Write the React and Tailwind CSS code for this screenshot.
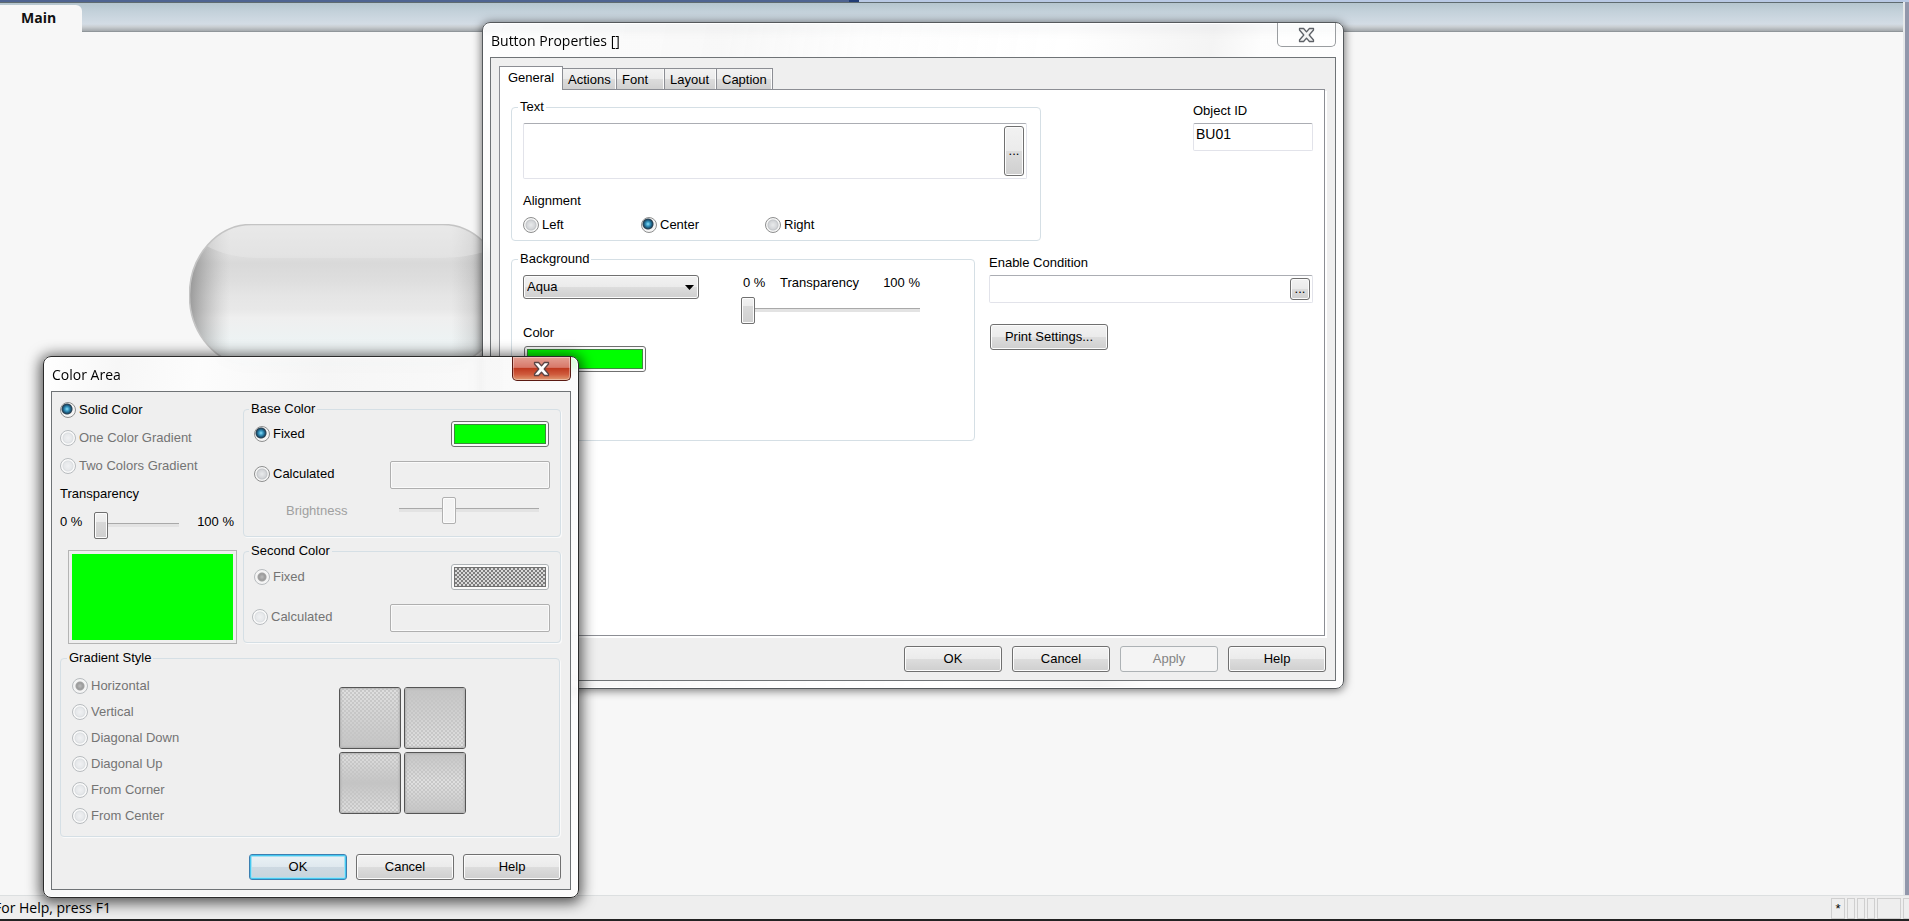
import React from "react";

const CONTROL =
  "rounded-[3px] border border-[#707070] bg-[linear-gradient(#f2f2f2,#ebebeb_50%,#dddddd_50%,#cfcfcf)] shadow-[inset_0_0_0_1px_#fcfcfc] text-black";

function PushButton({ children, className = "w-[98px]", variant = "normal" }) {
  const look =
    variant === "disabled"
      ? "rounded-[3px] border border-[#adb2b5] bg-[#f4f4f4] text-[#838383]"
      : variant === "default"
        ? "rounded-[3px] border border-[#3c7fb1] bg-[linear-gradient(#eaf2f6,#dfe8ee_50%,#cdd9e2_50%,#c8d4dc)] shadow-[inset_0_0_0_1px_#45c8f0,inset_0_0_0_2px_#a5e0f2] text-black"
        : CONTROL;
  return (
    <button type="button" disabled={variant === "disabled"} className={`h-[26px] shrink-0 leading-4 ${look} ${className}`}>
      {children}
    </button>
  );
}

function Radio({ name, label, defaultChecked, disabled, className = "" }) {
  return (
    <label className={`flex h-4 items-center gap-[3px] leading-4 ${disabled ? "text-[#747474]" : "text-black"} ${className}`}>
      <input
        type="radio"
        name={name}
        defaultChecked={defaultChecked}
        disabled={disabled}
        className="size-4 shrink-0 appearance-none rounded-full border border-[#8e8f8f] bg-[radial-gradient(circle_at_7px_7px,#e9ebec_0,#d3d5d8_4px,#c3c6c9_5px,#f6f6f6_6px)] checked:bg-[radial-gradient(circle_at_6px_6px,#8fe0f8_0,#3a9cc6_2px,#1b5577_4px,#2a3f4f_5px,#f4f4f4_6px)] disabled:border-[#b8bcbf] disabled:bg-[radial-gradient(circle_at_7px_7px,#f0f1f3_0,#e6e8ea_4px,#dcdfe2_5px,#fafafa_6px)] disabled:checked:bg-[radial-gradient(circle_at_7px_7px,#bbbbbb_0,#9c9c9c_3px,#a2a2a2_4px,#f4f4f4_5px)]"
      />
      {label}
    </label>
  );
}

function Slider({ label, value, disabled, className = "" }) {
  return (
    <input
      type="range"
      aria-label={label}
      defaultValue={value}
      disabled={disabled}
      className={`h-[27px] min-w-0 appearance-none bg-[linear-gradient(#a9a9a9,#a9a9a9_1px,#e3e3e3_1px)] bg-[length:100%_4px] bg-[position:0_11px] bg-no-repeat [&::-webkit-slider-thumb]:h-[27px] [&::-webkit-slider-thumb]:w-[14px] [&::-webkit-slider-thumb]:appearance-none [&::-webkit-slider-thumb]:rounded-[2px] [&::-webkit-slider-thumb]:border [&::-webkit-slider-thumb]:shadow-[inset_0_0_0_1px_#fcfcfc] ${
        disabled
          ? "[&::-webkit-slider-thumb]:border-[#b0b0b0] [&::-webkit-slider-thumb]:bg-[#f4f4f4]"
          : "[&::-webkit-slider-thumb]:border-[#707070] [&::-webkit-slider-thumb]:bg-[linear-gradient(#f2f2f2,#ebebeb_34%,#d9d9d9_34%,#cfcfcf)]"
      } ${className}`}
    />
  );
}

function Swatch({ label, disabled, className = "w-[98px]" }) {
  return (
    <button
      type="button"
      aria-label={label}
      disabled={disabled}
      className={`h-[26px] shrink-0 rounded-[3px] border bg-[#fafafa] p-0.5 ${disabled ? "border-[#adb2b5]" : "border-[#707070]"} ${className}`}
    >
      <span
        className={`block h-full border ${
          disabled
            ? "border-[#707070] bg-[repeating-conic-gradient(#7e7e7e_0_25%,#dadada_0_50%)] bg-[length:4px_4px]"
            : "border-[#3c8a3c] bg-[#00ff00]"
        }`}
      />
    </button>
  );
}

function Group({ title, legendClass = "ml-[6px]", className = "", children }) {
  return (
    <fieldset className={`min-w-0 rounded-[4px] border border-[#d5dfe5] ${className}`}>
      <legend className={`h-4 px-0.5 leading-4 text-black ${legendClass}`}>{title}</legend>
      {children}
    </fieldset>
  );
}

function CloseGlyph({ fill, stroke }) {
  return (
    <svg viewBox="0 0 17 16" className="h-4 w-[17px]" aria-hidden="true">
      <path
        d="M1.5 1.5H5.6L8.5 4.9L11.4 1.5H15.5V3L11.2 8L15.5 13V14.5H11.4L8.5 11.1L5.6 14.5H1.5V13L5.8 8L1.5 3Z"
        fill={fill}
        stroke={stroke}
        strokeWidth="1.3"
        strokeLinejoin="round"
      />
    </svg>
  );
}

function Dialog({ title, active, className, children }) {
  return (
    <section
      aria-label={title}
      className={`absolute flex flex-col rounded-[8px] border px-[7px] pb-[7px] backdrop-blur-[3px] ${
        active
          ? "border-[#2b2b2b] bg-[linear-gradient(100deg,#ffffffe6,#f6f6f6e6_12%,#fcfcfce6_25%,#f5f5f5e6_45%,#fdfdfde6)] shadow-[0_2px_14px_3px_rgba(0,0,0,0.65),inset_0_0_0_1px_#ffffff]"
          : "border-[#55595c] bg-[linear-gradient(100deg,#ffffffe0,#f7f7f7e6_25%,#fdfdfdf0_40%,#ffffffe6_60%,#f3f3f3e6_75%,#fdfdfde6_80%)] shadow-[0_1px_8px_1px_rgba(0,0,0,0.5),inset_0_0_0_1px_#ffffff]"
      } ${className}`}
    >
      <header className="flex h-[34px] shrink-0 items-start justify-between">
        <h2 className="pt-2 pl-px font-['Open_Sans',sans-serif] text-[14px] leading-5 text-black">{title}</h2>
        <button
          type="button"
          aria-label={`Close ${title}`}
          className={`flex h-6 w-[59px] items-center justify-center rounded-b-[5px] border border-t-0 ${
            active
              ? "border-[#5b1a12] bg-[linear-gradient(#e3a093,#d8796a_45%,#bf3a20_50%,#cf5a3c_75%,#e09a72)] shadow-[inset_0_0_0_1px_rgba(255,255,255,0.35)]"
              : "border-[#9a9da0] bg-white/30"
          }`}
        >
          <CloseGlyph fill={active ? "#ffffff" : "#f4f4f4"} stroke={active ? "#5a4444" : "#5c6066"} />
        </button>
      </header>
      <div className="flex grow flex-col border border-[#6f7376] bg-[#efefef]">{children}</div>
    </section>
  );
}

const TABS = [
  { label: "Actions", width: "w-[55px]" },
  { label: "Font", width: "w-[49px]" },
  { label: "Layout", width: "w-[53px]" },
  { label: "Caption", width: "w-[57px]" },
];

function ButtonProperties() {
  return (
    <Dialog title="Button Properties []" className="top-[22px] left-[482px] w-[862px]">
      <div className="flex grow flex-col pt-2 pr-[9px] pb-[8px] pl-2">
        <div role="tablist" className="relative flex items-end">
          <button
            type="button"
            role="tab"
            aria-selected="true"
            className="relative -mb-px h-6 w-16 border border-b-0 border-[#8c8e94] bg-white pb-px leading-4"
          >
            General
          </button>
          {TABS.map((tab) => (
            <button
              key={tab.label}
              type="button"
              role="tab"
              aria-selected="false"
              className={`-ml-px h-[21px] border border-b-0 border-[#8c8e94] bg-[linear-gradient(#f2f2f2,#ebebeb_50%,#dddddd_50%,#d0d0d0)] pt-0.5 pl-[5px] text-left leading-4 shadow-[inset_-1px_0_0_#fcfcfc] ${tab.width}`}
            >
              {tab.label}
            </button>
          ))}
        </div>

        <div role="tabpanel" className="mr-px flex min-h-[547px] grow flex-col gap-[10px] border border-[#8c8e94] bg-white px-[11px] pt-[9px] shadow-[2px_2px_0_#ffffff]">
          <div className="flex items-start justify-between">
            <Group title="Text" className="w-[530px]">
              <div className="flex flex-col pt-2 pr-[13px] pb-[7px] pl-[11px]">
                <div className="flex h-14 rounded-[2px] border border-[#e2e3ea] border-t-[#abadb3] p-0.5">
                  <textarea aria-label="Text" className="min-w-0 grow resize-none outline-none" />
                  <button type="button" aria-label="Edit text expression" className={`w-5 text-center leading-4 ${CONTROL}`}>
                    ...
                  </button>
                </div>
                <span className="mt-[14px] leading-4">Alignment</span>
                <div className="mt-2 flex">
                  <Radio name="align" label="Left" className="w-[118px]" />
                  <Radio name="align" label="Center" defaultChecked className="w-[124px]" />
                  <Radio name="align" label="Right" />
                </div>
              </div>
            </Group>
            <label className="mt-1 flex w-[120px] flex-col gap-1 leading-4">
              Object ID
              <input
                defaultValue="BU01"
                className="h-7 w-full rounded-[2px] border border-[#e2e3ea] border-t-[#abadb3] px-0.5 pb-1.5 text-[14px] outline-none"
              />
            </label>
          </div>

          <div className="flex items-start gap-[14px]">
            <Group title="Background" className="w-[464px]">
              <div className="flex items-start gap-[42px] pt-2 pb-[68px] pl-[11px]">
                <div className="flex w-44 flex-col">
                  <div className="relative">
                    <select
                      aria-label="Background style"
                      defaultValue="Aqua"
                      className={`h-6 w-full appearance-none px-[3px] text-[13px] ${CONTROL}`}
                    >
                      <option>Aqua</option>
                    </select>
                    <svg viewBox="0 0 9 5" className="pointer-events-none absolute top-[10px] right-[5px] h-[5px] w-[9px]" aria-hidden="true">
                      <path d="M0 0H9L4.5 5Z" fill="#000" />
                    </svg>
                  </div>
                  <span className="mt-[26px] leading-4">Color</span>
                  <Swatch label="Background color" className="mt-[5px] ml-px w-[122px]" />
                </div>
                <div className="flex w-[179px] flex-col">
                  <div className="flex pl-0.5 leading-4">
                    <span className="w-[37px]">0 %</span>
                    <span className="grow">Transparency</span>
                    <span>100 %</span>
                  </div>
                  <Slider label="Transparency" value={0} className="mt-[6px] w-full" />
                </div>
              </div>
            </Group>

            <div className="mt-1 flex grow flex-col">
              <label htmlFor="enable" className="leading-4">
                Enable Condition
              </label>
              <div className="mt-1 flex h-7 items-center rounded-[2px] border border-[#e2e3ea] border-t-[#abadb3] px-0.5">
                <input id="enable" className="h-full min-w-0 grow outline-none" />
                <button type="button" aria-label="Edit enable condition" className={`h-[22px] w-5 leading-4 ${CONTROL}`}>
                  ...
                </button>
              </div>
              <PushButton className="mt-[21px] ml-px w-[118px]">Print Settings...</PushButton>
            </div>
          </div>
        </div>

        <div className="mt-[10px] flex justify-end gap-[10px]">
          <PushButton>OK</PushButton>
          <PushButton>Cancel</PushButton>
          <PushButton variant="disabled">Apply</PushButton>
          <PushButton>Help</PushButton>
        </div>
      </div>
    </Dialog>
  );
}

const STYLES = ["Horizontal", "Vertical", "Diagonal Down", "Diagonal Up", "From Corner", "From Center"];

const TILES = [
  { label: "Gradient light to dark", fade: "bg-[linear-gradient(#c4c4c400,#c4c4c4)]" },
  { label: "Gradient dark to light", fade: "bg-[linear-gradient(#c4c4c4,#c4c4c400)]" },
  { label: "Gradient dark center", fade: "bg-[linear-gradient(#c4c4c400,#c4c4c4,#c4c4c400)]" },
  { label: "Gradient light center", fade: "bg-[linear-gradient(#c4c4c4,#c4c4c400,#c4c4c4)]" },
];

function ColorField({ label }) {
  return <input aria-label={label} disabled className="h-7 w-40 rounded-[2px] border border-[#afafaf] bg-[#efefef] shadow-[inset_0_0_0_1px_#fafafa]" />;
}

function ColorArea() {
  return (
    <Dialog title="Color Area" active className="top-[356px] left-[43px] w-[536px]">
      <div className="flex flex-col pt-[9px] pr-[9px] pb-[9px] pl-2">
        <div className="flex gap-[6px]">
          <div className="flex w-[177px] shrink-0 flex-col pt-px">
            <div className="flex flex-col gap-3">
              <Radio name="fill" label="Solid Color" defaultChecked />
              <Radio name="fill" label="One Color Gradient" disabled />
              <Radio name="fill" label="Two Colors Gradient" disabled />
              <span className="leading-4">Transparency</span>
            </div>
            <div className="mt-[10px] flex items-start leading-4">
              <span className="w-[34px] pt-0.5">0 %</span>
              <Slider label="Area transparency" value={0} className="w-[85px]" />
              <span className="grow pt-0.5 pr-[3px] text-right">100 %</span>
            </div>
            <div className="mt-[11px] ml-2 h-[94px] border border-[#b4b4b4] p-[3px]">
              <div className="h-full bg-[#00ff00]" />
            </div>
          </div>

          <div className="flex grow flex-col gap-[6px]">
            <Group title="Base Color" legendClass="ml-[5px]" className="shadow-[1px_1px_0_#fafafa]">
              <div className="flex flex-col pt-1 pr-[10px] pb-3 pl-[10px]">
                <div className="flex items-center justify-between">
                  <Radio name="base" label="Fixed" defaultChecked />
                  <Swatch label="Base color" className="mr-px w-[98px]" />
                </div>
                <div className="mt-[14px] flex items-start justify-between">
                  <Radio name="base" label="Calculated" className="mt-[5px]" />
                  <ColorField label="Base color expression" />
                </div>
                <div className="mt-2 flex items-center justify-between pl-8 text-[#a0a0a0]">
                  <span className="leading-4">Brightness</span>
                  <Slider label="Brightness" value={34} disabled className="mr-[11px] w-[140px]" />
                </div>
              </div>
            </Group>
            <Group title="Second Color" legendClass="ml-[5px]" className="shadow-[1px_1px_0_#fafafa]">
              <div className="flex flex-col pt-[5px] pr-[10px] pb-[10px] pl-[10px]">
                <div className="flex items-center justify-between">
                  <Radio name="second" label="Fixed" defaultChecked disabled />
                  <Swatch label="Second color" disabled className="mr-px w-[98px]" />
                </div>
                <div className="mt-[14px] flex items-start justify-between">
                  <Radio name="second" label="Calculated" disabled className="mt-[5px] -ml-0.5" />
                  <ColorField label="Second color expression" />
                </div>
              </div>
            </Group>
          </div>
        </div>

        <Group title="Gradient Style" className="mt-1.5 mr-px shadow-[1px_1px_0_#fafafa]">
          <div className="flex justify-between pt-3 pr-[93px] pb-3 pl-[11px]">
            <div className="flex flex-col gap-[10px]">
              {STYLES.map((style, i) => (
                <Radio key={style} name="style" label={style} disabled defaultChecked={i === 0} />
              ))}
            </div>
            <div className="mt-[9px] grid grid-cols-2 content-start gap-[3px]">
              {TILES.map((tile) => (
                <button
                  key={tile.label}
                  type="button"
                  aria-label={tile.label}
                  className="size-[62px] rounded-[3px] border border-[#555555] bg-[repeating-conic-gradient(#c8c8c8_0_25%,#e0e0e0_0_50%)] bg-[length:4px_4px]"
                >
                  <span className={`block size-full rounded-[2px] shadow-[inset_0_0_2px_1px_#b0b0b0] ${tile.fade}`} />
                </button>
              ))}
            </div>
          </div>
        </Group>

        <div className="mt-[17px] flex justify-end gap-[9px]">
          <PushButton variant="default">OK</PushButton>
          <PushButton>Cancel</PushButton>
          <PushButton>Help</PushButton>
        </div>
      </div>
    </Dialog>
  );
}

function AquaButton() {
  return (
    <svg viewBox="0 0 316 142" className="absolute top-[224px] left-[189px] h-[142px] w-[316px]" aria-hidden="true">
      <defs>
        <linearGradient id="body" x1="0" y1="0" x2="0" y2="1">
          <stop offset="0" stopColor="#e8e8e8" />
          <stop offset="0.22" stopColor="#dedede" />
          <stop offset="0.28" stopColor="#d9d9d9" />
          <stop offset="0.4" stopColor="#dedede" />
          <stop offset="0.5" stopColor="#e5e5e5" />
          <stop offset="0.6" stopColor="#e8e8e8" />
          <stop offset="0.66" stopColor="#efefef" />
          <stop offset="0.84" stopColor="#edf3f4" />
          <stop offset="1" stopColor="#f0f4f4" />
        </linearGradient>
        <linearGradient id="sides" x1="0" y1="0" x2="1" y2="0">
          <stop offset="0" stopColor="#666" stopOpacity="0.6" />
          <stop offset="0.05" stopColor="#777" stopOpacity="0.36" />
          <stop offset="0.1" stopColor="#888" stopOpacity="0.12" />
          <stop offset="0.13" stopColor="#999" stopOpacity="0" />
          <stop offset="0.83" stopColor="#999" stopOpacity="0" />
          <stop offset="0.9" stopColor="#777" stopOpacity="0.2" />
          <stop offset="1" stopColor="#666" stopOpacity="0.6" />
        </linearGradient>
        <clipPath id="pill">
          <rect x="0.5" y="0.5" width="315" height="141" rx="62" ry="70" />
        </clipPath>
      </defs>
      <g clipPath="url(#pill)">
        <rect width="316" height="142" fill="url(#body)" />
        <rect width="316" height="142" fill="url(#sides)" />
        <path d="M0 0H316V20C290 32 270 34 245 34H71C46 34 30 29 14 20Z" fill="#ececec" opacity="0.4" />
      </g>
      <rect x="0.5" y="0.5" width="315" height="141" rx="62" ry="70" fill="none" stroke="#c4c4c4" strokeWidth="1.6" />
    </svg>
  );
}

export default function App() {
  return (
    <div className="relative flex h-screen flex-col overflow-hidden bg-[#f7f7f7] font-['Liberation_Sans',Arial,sans-serif] text-[13px] text-black">
      <div className="flex h-0.5 shrink-0">
        <div className="w-[45%] border-r-[10px] border-[#213c75] bg-[#4f6491]" />
        <div className="grow bg-[#b9c9e4]" />
      </div>
      <div className="flex grow">
        <main className="flex grow flex-col border-r-2 border-[#e6e8ea]">
          <nav className="flex h-[30px] shrink-0 items-end border-t border-b border-t-[#5f6b70] border-b-[#90969a] bg-[linear-gradient(#b5c5ce,#c3d1da_30%,#d3dce5_75%,#c9ced2_85%,#a4a9ad)]">
            <a
              href="#main"
              className="-mb-px flex h-[27px] w-[82px] items-center rounded-tr-[6px] bg-[#f7f7f7] pb-0.5 pl-[21px] font-['Open_Sans',sans-serif] text-[14px] leading-5 font-bold text-[#111]"
            >
              Main
            </a>
          </nav>
          <div className="grow" />
        </main>
        <div className="w-1 bg-[#9197ab]" />
      </div>
      <footer className="flex h-[26px] shrink-0 items-stretch justify-between border-t border-b-2 border-t-[#dcdfe0] border-b-[#222222] bg-[#eeeeee]">
        <span className="-ml-[6px] font-['Open_Sans',sans-serif] text-[14px] leading-6">For Help, press F1</span>
        <div className="flex gap-0.5 pt-0.5">
          <span className="w-[14px] border border-[#cfcfcf] text-center leading-5">*</span>
          <span className="w-2 border border-[#cfcfcf]" />
          <span className="w-2 border border-[#cfcfcf]" />
          <span className="w-2 border border-[#cfcfcf]" />
          <span className="w-6 border border-[#cfcfcf]" />
          <span className="w-[6px] border border-r-0 border-[#cfcfcf]" />
        </div>
      </footer>

      <AquaButton />
      <ButtonProperties />
      <ColorArea />
    </div>
  );
}
